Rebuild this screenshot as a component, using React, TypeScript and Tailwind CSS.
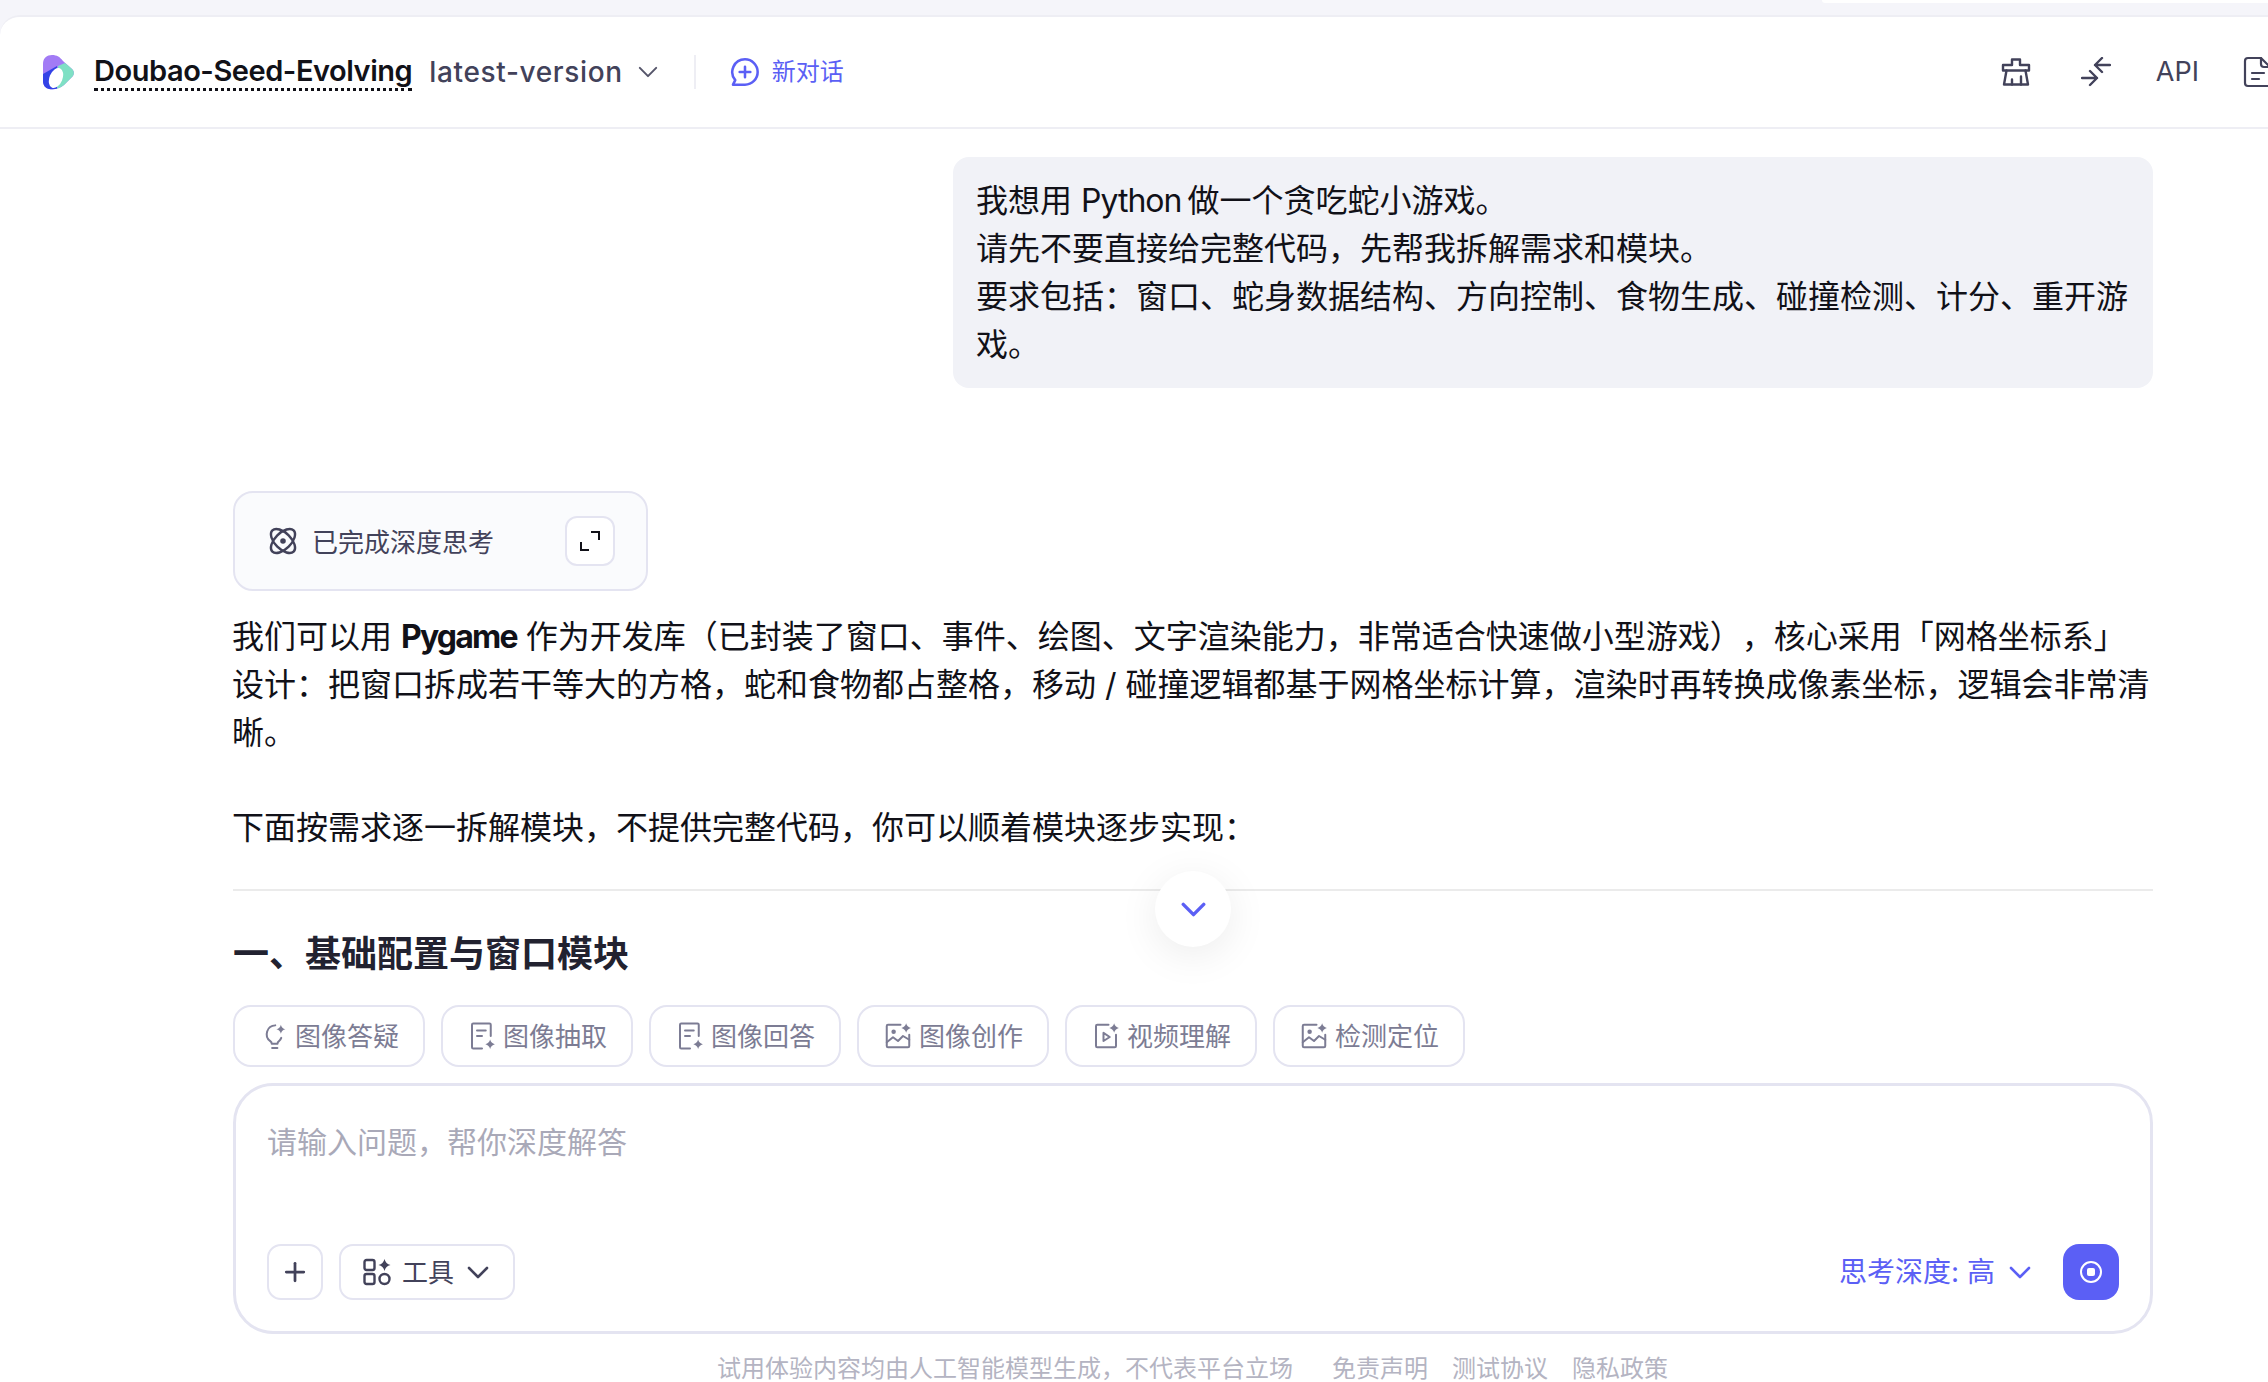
import { Plus } from "lucide-react";

const chips = [
  { label: "图像答疑", icon: "bulb" },
  { label: "图像抽取", icon: "doc" },
  { label: "图像回答", icon: "doc" },
  { label: "图像创作", icon: "image" },
  { label: "视频理解", icon: "video" },
  { label: "检测定位", icon: "image" },
];

function Sparkle({ x, y, r }: { x: number; y: number; r: number }) {
  return (
    <path
      d={`M${x} ${y - r}Q${x + r * 0.2} ${y - r * 0.2} ${x + r} ${y}Q${x + r * 0.2} ${y + r * 0.2} ${x} ${y + r}Q${x - r * 0.2} ${y + r * 0.2} ${x - r} ${y}Q${x - r * 0.2} ${y - r * 0.2} ${x} ${y - r}Z`}
      fill="currentColor"
      stroke="none"
    />
  );
}

function Chevron({ className, sw = 2.6 }: { className: string; sw?: number }) {
  return (
    <svg viewBox="0 0 22 13" className={className} fill="none" stroke="currentColor" strokeWidth={sw} strokeLinecap="round" strokeLinejoin="round">
      <path d="M2 2l9 9 9-9" />
    </svg>
  );
}

function ChipIcon({ type }: { type: string }) {
  return (
    <svg viewBox="0 0 24 24" className="w-[30px] h-[30px] shrink-0" fill="none" stroke="currentColor" strokeWidth="1.6" strokeLinecap="round" strokeLinejoin="round">
      {type === "bulb" && (
        <>
          <path d="M13 3.5a7 7 0 0 0-4 12.6c.8.6 1.2 1.3 1.2 2h4.6c0-.8.4-1.5 1.2-2a7 7 0 0 0 1.8-2.6" />
          <path d="M10.5 21.5h4.2" />
          <Sparkle x={17.5} y={6.5} r={3.6} />
        </>
      )}
      {type === "doc" && (
        <>
          <path d="M12 22H5a1 1 0 0 1-1-1V3a1 1 0 0 1 1-1h13a1 1 0 0 1 1 1v9" />
          <path d="M8 7.5h7M8 12h4" />
          <Sparkle x={18.5} y={18.5} r={3.8} />
        </>
      )}
      {type === "image" && (
        <>
          <path d="M14 3H4a1 1 0 0 0-1 1v16a1 1 0 0 0 1 1h16a1 1 0 0 0 1-1v-9" />
          <path d="M3 17l5-4 4 3 4-4 5 3" />
          <circle cx="8.5" cy="8.5" r="1" fill="currentColor" />
          <Sparkle x={18.5} y={5.5} r={3.8} />
        </>
      )}
      {type === "video" && (
        <>
          <path d="M14 3H5a1 1 0 0 0-1 1v16a1 1 0 0 0 1 1h14a1 1 0 0 0 1-1v-9" />
          <path d="M10 9.5v6.5l5-3.2z" />
          <Sparkle x={18.5} y={5.5} r={3.8} />
        </>
      )}
    </svg>
  );
}

function Chip({ label, icon }: { label: string; icon: string }) {
  return (
    <div className="w-[192px] h-[62px] rounded-[18px] border-2 border-[#e4e4f1] bg-white flex items-center justify-center gap-[6px] text-[26px] text-[#7c7c94]">
      <ChipIcon type={icon} />
      <span>{label}</span>
    </div>
  );
}

export default function App() {
  return (
    <div className="relative w-[2268px] h-[1382px] overflow-hidden bg-[#f5f5fa] text-[#1c1c28] font-['Inter','Noto_Sans_CJK_SC',sans-serif] flex flex-col">
      <div className="h-[15px] shrink-0 flex justify-end">
        <div className="w-[446px] h-[3px] bg-white rounded-bl-[3px]" />
      </div>
      <div className="flex-1 min-h-0 bg-white border-t-2 border-[#eeeef4] rounded-tl-[20px] flex flex-col">
        {/* Header */}
        <div className="h-[112px] shrink-0 border-b-2 border-[#eeeef4] pl-[43px] flex items-center overflow-hidden whitespace-nowrap">
          <svg viewBox="0 0 31 35" className="w-[31px] h-[35px] shrink-0">
            <clipPath id="logo-clip">
              <path d="M9 0C14 0 17 2 20 6L29 14C32 17 31 20 29 22L21 30C16 34 11 35 6 34C2 33 0 30 0 26V9C0 3 4 0 9 0Z" />
            </clipPath>
            <g clipPath="url(#logo-clip)">
              <rect width="31" height="35" fill="#a27bf5" />
              <path d="M0 19L14 11V35H0Z" fill="#3442e6" />
              <path d="M15 11L22 8L31 12V35H14Z" fill="#7fe0c4" />
              <ellipse cx="13" cy="23" rx="6.5" ry="10.5" transform="rotate(22 13 23)" fill="white" />
            </g>
          </svg>
          <span className="ml-[20px] text-[29px] font-semibold tracking-[-0.45px] text-[#111118] border-b-[3px] border-dotted border-[#111118] leading-[34px]">
            Doubao-Seed-Evolving
          </span>
          <span className="ml-[17px] text-[28px] font-medium tracking-[0.65px] text-[#42425a]">latest-version</span>
          <Chevron className="ml-[15px] w-[20px] h-[12px] shrink-0 text-[#55556a]" sw={2.2} />
          <div className="ml-[36px] w-[2px] h-[34px] shrink-0 bg-[#eeeef4]" />
          <svg viewBox="0 0 24 24" className="ml-[33px] w-[32px] h-[32px] shrink-0 text-[#5b5ff5]" fill="none" stroke="currentColor" strokeWidth="1.9" strokeLinecap="round" strokeLinejoin="round">
            <path d="M12 2.5a9.5 9.5 0 0 1 0 19H3l1.7-3.4A9.5 9.5 0 0 1 12 2.5z" />
            <path d="M12 8v8M8 12h8" />
          </svg>
          <span className="ml-[11px] text-[24px] text-[#5b5ff5]">新对话</span>

          <svg viewBox="0 0 30 30" className="ml-[1157px] w-[30px] h-[30px] shrink-0 text-[#42425a]" fill="none" stroke="currentColor" strokeWidth="2.4" strokeLinecap="round" strokeLinejoin="round">
            <path d="M11 8V2.5h8V8h9v5.5H2V8z" />
            <path d="M5.5 13.5 3 27.5h24l-2.500-14" />
            <path d="M11 27.500v-5M20 27.500v-8" />
          </svg>
          <svg viewBox="-1 -1 30 30" className="ml-[50px] w-[30px] h-[30px] shrink-0 text-[#42425a]" fill="none" stroke="currentColor" strokeWidth="2.4" strokeLinecap="round" strokeLinejoin="round">
            <path d="M0 20h15M8 13l7 7-7 7" />
            <path d="M28 7H13M20 0l-7 7 7 7" />
          </svg>
          <span className="ml-[45px] text-[27px] text-[#42425a]">API</span>
          <svg viewBox="0 0 30 32" className="ml-[44px] w-[30px] h-[32px] shrink-0 text-[#42425a]" fill="none" stroke="currentColor" strokeWidth="2.2" strokeLinecap="round" strokeLinejoin="round">
            <path d="M5 2h13l9 9v16a3 3 0 0 1-3 3H5a3 3 0 0 1-3-3V5a3 3 0 0 1 3-3z" />
            <path d="M18 2v6a3 3 0 0 0 3 3h6" />
            <path d="M9 17h12M9 23h7" />
          </svg>
        </div>

        {/* Messages */}
        <div className="h-[876px] shrink-0 overflow-hidden pt-[28px] pl-[233px] pr-[115px]">
          <div className="flex justify-end">
            <div className="w-[1200px] h-[231px] rounded-[16px] bg-[#f1f2f7] px-[23px] py-[20px] text-[32px] leading-[48px] text-[#111118]">
              我想用 <span className="tracking-[-1px] -mr-[3px]">Python</span> 做一个贪吃蛇小游戏。
              <br />
              请先不要直接给完整代码，先帮我拆解需求和模块。
              <br />
              要求包括：窗口、蛇身数据结构、方向控制、食物生成、碰撞检测、计分、重开游戏。
            </div>
          </div>

          <div className="mt-[103px] w-[415px] h-[100px] rounded-[20px] border-2 border-[#e4e4f1] bg-[#fafbfd] pl-[33px] pr-[31px] flex items-center">
            <svg viewBox="0 0 28 28" className="w-[30px] h-[30px] shrink-0 text-[#42425a]" fill="none" stroke="currentColor" strokeWidth="2.3">
              <ellipse cx="14" cy="14" rx="14" ry="7.5" transform="rotate(45 14 14)" />
              <ellipse cx="14" cy="14" rx="14" ry="7.5" transform="rotate(-45 14 14)" />
              <circle cx="14" cy="14" r="2.6" fill="currentColor" stroke="none" />
            </svg>
            <span className="ml-[14px] mt-[2px] text-[26px] text-[#42425a]">已完成深度思考</span>
            <div className="ml-auto w-[50px] h-[50px] rounded-[12px] border-2 border-[#e4e4f1] bg-white flex items-center justify-center">
              <svg viewBox="0 0 22 22" className="w-[22px] h-[22px] text-[#111118]" fill="none" stroke="currentColor" strokeWidth="2">
                <path d="M12 2h8v8" />
                <path d="M10 20H2v-8" />
              </svg>
            </div>
          </div>

          <div className="mt-[22px] -ml-[1px] text-[32px] leading-[48px] text-[#111118] [text-spacing-trim:space-all]">
            <p>
              我们可以用 <b className="font-bold tracking-[-1.8px]">Pygame</b> 作为开发库（已封装了窗口、事件、绘图、文字渲染能力，非常适合快速做小型游戏），核心采用「网格坐标系」设计：把窗口拆成若干等大的方格，蛇和食物都占整格，移动 / 碰撞逻辑都基于网格坐标计算，渲染时再转换成像素坐标，逻辑会非常清晰。
            </p>
            <p className="mt-[47px]">下面按需求逐一拆解模块，不提供完整代码，你可以顺着模块逐步实现：</p>
          </div>
          <div className="mt-[37px] h-[2px] bg-[#ebebeb]" />
          <h2 className="mt-[39px] text-[36px] leading-[48px] font-bold text-[#222230]">一、基础配置与窗口模块</h2>
        </div>

        {/* Composer */}
        <div className="pl-[233px] pr-[115px]">
          <div className="flex gap-[16px]">
            {chips.map((c) => (
              <Chip key={c.label} label={c.label} icon={c.icon} />
            ))}
          </div>
          <div className="mt-[16px] h-[251px] rounded-[40px] border-[3px] border-[#e4e4f1] bg-white pl-[31px] pr-[31px] pt-[31px] flex flex-col">
            <div className="text-[30px] leading-[50px] text-[#a9a9b8]">请输入问题，帮你深度解答</div>
            <div className="mt-auto mb-[31px] flex items-center">
              <div className="w-[56px] h-[56px] rounded-[14px] border-2 border-[#e4e4f1] flex items-center justify-center text-[#42425a]">
                <Plus className="w-[30px] h-[30px]" strokeWidth={2.2} />
              </div>
              <div className="ml-[16px] w-[176px] h-[56px] rounded-[14px] border-2 border-[#e4e4f1] pl-[22px] flex items-center text-[#42425a]">
                <svg viewBox="0 0 28 28" className="w-[28px] h-[28px] shrink-0" fill="none" stroke="currentColor" strokeWidth="2.4">
                  <rect x="1.5" y="2" width="10" height="10" rx="2" />
                  <rect x="1.5" y="16" width="10" height="10" rx="2" />
                  <rect x="16.5" y="16" width="10" height="10" rx="5" />
                  <Sparkle x={21.5} y={7} r={6} />
                </svg>
                <span className="ml-[11px] text-[26px]">工具</span>
                <Chevron className="ml-[13px] w-[22px] h-[13px]" />
              </div>
              <span className="ml-auto text-[28px] text-[#5b5ff5]">思考深度: 高</span>
              <Chevron className="ml-[14px] w-[22px] h-[13px] text-[#5b5ff5]" />
              <div className="ml-[32px] w-[56px] h-[56px] rounded-[16px] bg-[#5b5ff5] flex items-center justify-center">
                <svg viewBox="0 0 24 24" className="w-[24px] h-[24px]" fill="none" stroke="white" strokeWidth="2">
                  <circle cx="12" cy="12" r="10" />
                  <rect x="8" y="8" width="8" height="8" rx="2" fill="white" stroke="none" />
                </svg>
              </div>
            </div>
          </div>
          <div className="mt-[18px] pl-[484px] flex items-center text-[24px] leading-[34px] text-[#b4b4c2]">
            <span>试用体验内容均由人工智能模型生成，不代表平台立场</span>
            <span className="ml-[39px]">免责声明</span>
            <span className="ml-[24px]">测试协议</span>
            <span className="ml-[24px]">隐私政策</span>
          </div>
        </div>
      </div>

      {/* Scroll to bottom */}
      <div className="absolute left-[1155px] top-[871px] w-[76px] h-[76px] rounded-full bg-white shadow-[0_8px_40px_rgba(0,0,0,0.08)] flex items-center justify-center">
        <Chevron className="w-[25px] h-[15px] text-[#5b5ff5]" sw={3} />
      </div>
    </div>
  );
}
